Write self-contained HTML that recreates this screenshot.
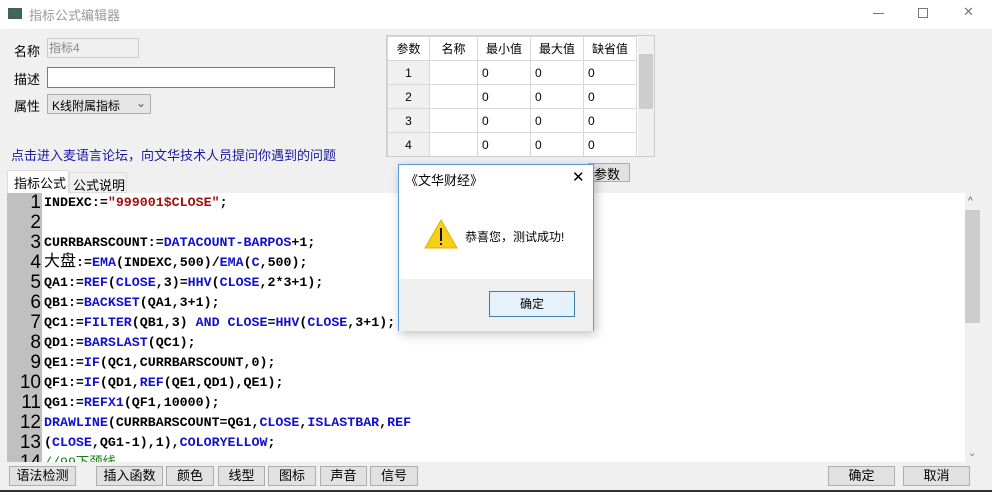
<!DOCTYPE html><html><head><meta charset="utf-8"><style>
*{margin:0;padding:0;box-sizing:border-box}
body{width:992px;height:492px;background:#f0f0f0;position:relative;overflow:hidden;font-family:"Liberation Sans","Noto Sans CJK SC",sans-serif;font-size:12px;color:#000}
.a{position:absolute}
.btn{position:absolute;background:#e1e1e1;border:1px solid #adadad;text-align:center;line-height:18px;font-size:13px;height:20px;top:466px}
.code{position:absolute;left:7px;top:193px;width:958px;height:269px;background:#fff;overflow:hidden}
.gut{position:absolute;left:0;top:0;width:35px;height:269px;background:#c0c0c0}
.ln{position:absolute;left:0;width:35px;height:20px;text-align:right;font:19px "Liberation Sans",sans-serif;line-height:20px;padding-right:1px}
.cl{position:absolute;left:37px;height:20px;font:bold 13.3px "Liberation Mono","Noto Sans CJK SC",monospace;line-height:20px;white-space:pre}
.k{color:#1010d0}.s{color:#a01010}
table{border-collapse:collapse}
td{border:1px solid #d8d8d8;height:24px;font-size:12px;padding-left:4px;background:#fff}
</style></head><body>
<div class="a" style="left:0;top:0;width:992px;height:29px;background:#fff"></div>
<div class="a" style="left:8px;top:8px;width:14px;height:11px;border:1px solid #555;background:#3a6a5a"></div>
<div class="a" style="left:29px;top:5px;font-size:13px;color:#999">指标公式编辑器</div>
<div class="a" style="left:873px;top:13px;width:11px;height:1px;background:#777"></div>
<div class="a" style="left:918px;top:8px;width:10px;height:10px;border:1px solid #777"></div>
<div class="a" style="left:963px;top:4px;font-size:13px;color:#777">✕</div>

<div class="a" style="left:14px;top:41px;font-size:13px">名称</div>
<div class="a" style="left:47px;top:38px;width:92px;height:20px;border:1px solid #ccc;background:#f0f0f0;color:#888;font-size:12px;padding-left:1px">指标4</div>
<div class="a" style="left:14px;top:69px;font-size:13px">描述</div>
<div class="a" style="left:47px;top:67px;width:288px;height:21px;border:1px solid #7a7a7a;background:#fff"></div>
<div class="a" style="left:14px;top:96px;font-size:13px">属性</div>
<div class="a" style="left:47px;top:94px;width:104px;height:20px;border:1px solid #adadad;background:#e5e5e5;font-size:12px;padding:2px 4px">K线附属指标<span style="position:absolute;left:88px;top:1px;color:#555">⌄</span></div>
<div class="a" style="left:11px;top:145px;color:#1a1aa0;font-size:13px">点击进入麦语言论坛，向文华技术人员提问你遇到的问题</div>

<div class="a" style="left:386px;top:35px;width:269px;height:122px;border:1px solid #ccc;background:#fff;overflow:hidden">
<table style="width:250px">
<tr><td style="text-align:center;width:42px;padding:0">参数</td><td style="text-align:center;width:48px;padding:0">名称</td><td style="text-align:center;width:53px;padding:0">最小值</td><td style="text-align:center;width:53px;padding:0">最大值</td><td style="text-align:center;padding:0">缺省值</td></tr>
<tr><td style="background:#f0f0f0;text-align:center;padding:0">1</td><td></td><td>0</td><td>0</td><td>0</td></tr>
<tr><td style="background:#f0f0f0;text-align:center;padding:0">2</td><td></td><td>0</td><td>0</td><td>0</td></tr>
<tr><td style="background:#f0f0f0;text-align:center;padding:0">3</td><td></td><td>0</td><td>0</td><td>0</td></tr>
<tr><td style="background:#f0f0f0;text-align:center;padding:0">4</td><td></td><td>0</td><td>0</td><td>0</td></tr>
</table>
<div class="a" style="left:251px;top:0;width:16px;height:120px;background:#f0f0f0"></div>
<div class="a" style="left:252px;top:18px;width:14px;height:55px;background:#cdcdcd"></div>
</div>
<div class="a" style="left:588px;top:163px;width:42px;height:19px;border:1px solid #adadad;background:#e1e1e1;font-size:13px;padding-left:5px">参数</div>

<div class="a" style="left:7px;top:170px;width:62px;height:23px;background:#fff;border:1px solid #ddd;border-bottom:none;font-size:13px;padding:2px 0 0 6px;white-space:nowrap">指标公式</div>
<div class="a" style="left:69px;top:172px;width:58px;height:21px;border:1px solid #ddd;font-size:13px;padding:2px 0 0 3px;white-space:nowrap">公式说明</div>

<div class="code"><div class="gut"></div>
<div class="ln" style="top:0">1</div><div class="cl" style="top:0">INDEXC:=<span class="s">"999001$CLOSE"</span>;</div>
<div class="ln" style="top:20px">2</div>
<div class="ln" style="top:40px">3</div><div class="cl" style="top:40px">CURRBARSCOUNT:=<span class="k">DATACOUNT-BARPOS</span>+1;</div>
<div class="ln" style="top:60px">4</div><div class="cl" style="top:60px"><span style="font-weight:normal;font-size:16px;line-height:16px">大盘</span>:=<span class="k">EMA</span>(INDEXC,500)/<span class="k">EMA</span>(<span class="k">C</span>,500);</div>
<div class="ln" style="top:80px">5</div><div class="cl" style="top:80px">QA1:=<span class="k">REF</span>(<span class="k">CLOSE</span>,3)=<span class="k">HHV</span>(<span class="k">CLOSE</span>,2*3+1);</div>
<div class="ln" style="top:100px">6</div><div class="cl" style="top:100px">QB1:=<span class="k">BACKSET</span>(QA1,3+1);</div>
<div class="ln" style="top:120px">7</div><div class="cl" style="top:120px">QC1:=<span class="k">FILTER</span>(QB1,3) <span class="k">AND CLOSE</span>=<span class="k">HHV</span>(<span class="k">CLOSE</span>,3+1);</div>
<div class="ln" style="top:140px">8</div><div class="cl" style="top:140px">QD1:=<span class="k">BARSLAST</span>(QC1);</div>
<div class="ln" style="top:160px">9</div><div class="cl" style="top:160px">QE1:=<span class="k">IF</span>(QC1,CURRBARSCOUNT,0);</div>
<div class="ln" style="top:180px">10</div><div class="cl" style="top:180px">QF1:=<span class="k">IF</span>(QD1,<span class="k">REF</span>(QE1,QD1),QE1);</div>
<div class="ln" style="top:200px">11</div><div class="cl" style="top:200px">QG1:=<span class="k">REFX1</span>(QF1,10000);</div>
<div class="ln" style="top:220px">12</div><div class="cl" style="top:220px"><span class="k">DRAWLINE</span>(CURRBARSCOUNT=QG1,<span class="k">CLOSE</span>,<span class="k">ISLASTBAR</span>,<span class="k">REF</span></div>
<div class="ln" style="top:240px">13</div><div class="cl" style="top:240px">(<span class="k">CLOSE</span>,QG1-1),1),<span class="k">COLORYELLOW</span>;</div>
<div class="ln" style="top:260px">14</div><div class="cl" style="top:260px;color:#108010;font-weight:normal">//99下颈线</div>
</div>
<div class="a" style="left:965px;top:193px;width:16px;height:269px;background:#f0f0f0"></div>
<div class="a" style="left:965px;top:210px;width:15px;height:113px;background:#cdcdcd"></div>
<div class="a" style="left:968px;top:196px;font-size:10px;color:#555">^</div>
<div class="a" style="left:968px;top:448px;font-size:10px;color:#777">⌄</div>

<div class="btn" style="left:9px;width:67px">语法检测</div>
<div class="btn" style="left:96px;width:67px">插入函数</div>
<div class="btn" style="left:166px;width:48px">颜色</div>
<div class="btn" style="left:218px;width:47px">线型</div>
<div class="btn" style="left:268px;width:48px">图标</div>
<div class="btn" style="left:320px;width:47px">声音</div>
<div class="btn" style="left:370px;width:48px">信号</div>
<div class="btn" style="left:828px;width:67px">确定</div>
<div class="btn" style="left:903px;width:67px">取消</div>
<div class="a" style="left:0;top:490px;width:992px;height:2px;background:#333"></div>

<div class="a" style="left:398px;top:164px;width:196px;height:167px;background:#fff;border:1px solid #5a9ae0;box-shadow:2px 3px 10px rgba(0,0,0,.25)">
<div class="a" style="left:6px;top:5px;font-size:13px">《文华财经》</div>
<div class="a" style="left:173px;top:3px;font-size:15px">✕</div>
<svg class="a" style="left:25px;top:54px" width="34" height="30"><polygon points="17,1 33,29 1,29" fill="#f7cf1a" stroke="#e0b000"/><rect x="16" y="9" width="2" height="13" fill="#111"/><rect x="16" y="24" width="2" height="2" fill="#111"/></svg>
<div class="a" style="left:66px;top:63px;font-size:12px">恭喜您，测试成功!</div>
<div class="a" style="left:0;top:114px;width:194px;height:52px;background:#f0f0f0"></div>
<div class="a" style="left:90px;top:126px;width:86px;height:26px;border:1px solid #3c7fb1;background:#e5f1fb;text-align:center;line-height:24px;font-size:12px">确定</div>
</div>
</body></html>
